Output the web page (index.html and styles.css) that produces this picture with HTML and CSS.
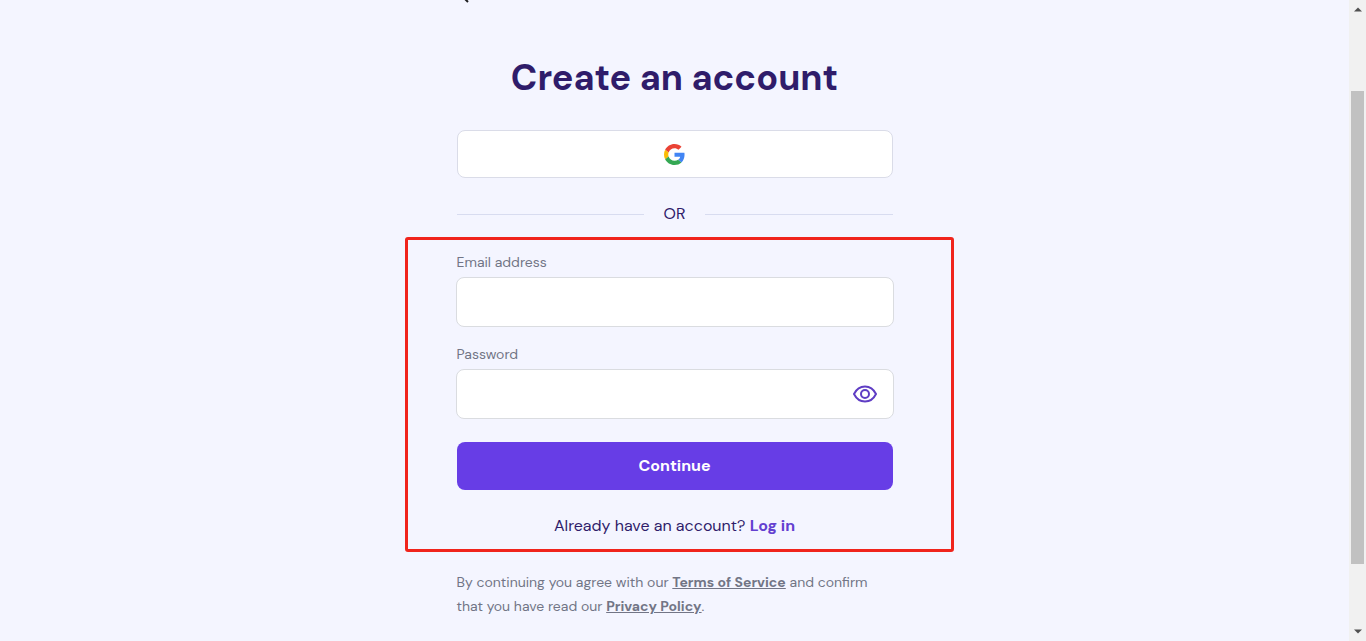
FILE: index.html
```html
<!DOCTYPE html>
<html lang="en">
<head>
    <meta charset="UTF-8">
    <meta name="viewport" content="width=device-width, initial-scale=1.0">
    <title>Create an account</title>
    <link rel="stylesheet" href="styles.css">
</head>
<body>
    <main class="page">
        <div class="signup">
            <a class="back" href="#" aria-label="Back">
                <svg width="12" height="3" viewBox="0 0 12 3"><path d="M7 -2L11 2" stroke="#1d1e20" stroke-width="2" fill="none"/></svg>
            </a>

            <h1>Create an account</h1>

            <button class="google" type="button" aria-label="Continue with Google">
                <svg width="21" height="21" viewBox="0 0 48 48">
                    <path fill="#EA4335" d="M24 9.5c3.54 0 6.71 1.22 9.21 3.6l6.85-6.85C35.9 2.38 30.47 0 24 0 14.62 0 6.51 5.38 2.56 13.22l7.98 6.19C12.43 13.72 17.74 9.5 24 9.5z"/>
                    <path fill="#4285F4" d="M46.98 24.55c0-1.57-.15-3.09-.38-4.55H24v9.02h12.94c-.58 2.96-2.26 5.48-4.78 7.18l7.73 6c4.51-4.18 7.09-10.36 7.09-17.65z"/>
                    <path fill="#FBBC05" d="M10.53 28.59c-.48-1.45-.76-2.99-.76-4.59s.27-3.14.76-4.59l-7.98-6.19C.92 16.46 0 20.12 0 24c0 3.88.92 7.54 2.56 10.78l7.97-6.19z"/>
                    <path fill="#34A853" d="M24 48c6.48 0 11.93-2.13 15.89-5.81l-7.73-6c-2.15 1.45-4.92 2.3-8.16 2.3-6.26 0-11.57-4.22-13.47-9.91l-7.98 6.19C6.51 42.62 14.62 48 24 48z"/>
                </svg>
            </button>

            <div class="divider">OR</div>

            <form class="form">
                <label for="email">Email address</label>
                <div class="field">
                    <input id="email" type="email" autocomplete="email">
                </div>

                <label for="password">Password</label>
                <div class="field">
                    <input id="password" type="password" autocomplete="new-password">
                    <button class="toggle" type="button" aria-label="Show password">
                        <svg width="24" height="24" viewBox="0 0 24 24" fill="none" stroke="#5f3dc4" stroke-width="2">
                            <path d="M1 12C3.3 7.400 7.300 4.500 12 4.500S20.700 7.400 23 12C20.700 16.600 16.700 19.500 12 19.500S3.300 16.600 1 12Z"/>
                            <circle cx="12" cy="12" r="4"/>
                        </svg>
                    </button>
                </div>

                <button class="continue" type="submit">Continue</button>
                <p class="login">Already have an account? <a href="#">Log in</a></p>
            </form>

            <p class="terms">By continuing you agree with our <a href="#">Terms of Service</a> and confirm that you have read our <a href="#">Privacy Policy</a>.</p>
        </div>
    </main>

    <div class="scrollbar" aria-hidden="true">
        <svg width="8" height="5" viewBox="0 0 8 5"><path d="M0 4.500L4 0.500L8 4.500Z" fill="#505050"/></svg>
        <div class="track"><div class="thumb"></div></div>
        <svg width="8" height="5" viewBox="0 0 8 5"><path d="M0 0.500L4 4.500L8 0.500Z" fill="#505050"/></svg>
    </div>
</body>
</html>
```
FILE: styles.css
```css
* {
    box-sizing: border-box;
}

body {
    margin: 0;
    display: flex;
    height: 100vh;
    overflow: hidden;
    background-color: #f4f5ff;
    color: #2f1c6a;
    font-family: "DM Sans", Inter, sans-serif;
    font-size: 16px;
    line-height: 24px;
}

button, input {
    font: inherit;
}

h1, p {
    margin: 0;
}

.page {
    flex: 1;
    display: flex;
    justify-content: center;
    align-items: flex-start;
}

.signup {
    width: 100%;
    max-width: 436px;
}

.back {
    display: flex;
    height: 3px;
}

h1 {
    margin: 51px 0 28px;
    font-size: 36px;
    line-height: 48px;
    font-weight: 700;
    text-align: center;
}

.google {
    display: flex;
    justify-content: center;
    align-items: center;
    width: 100%;
    height: 48px;
    background-color: #fff;
    border: 1px solid #dadce8;
    border-radius: 8px;
    cursor: pointer;
}

.divider {
    display: flex;
    align-items: center;
    gap: 20px;
    margin: 24px 0 26px;
}

.divider::before,
.divider::after {
    content: "";
    flex: 1;
    height: 1px;
    background-color: #d8dcf0;
}

.form {
    position: relative;
}

/* red highlight frame around the form */
.form::after {
    content: "";
    position: absolute;
    inset: -15px -61px -14px -52px;
    border: 3px solid #f0241c;
    border-radius: 3px;
    pointer-events: none;
}

label {
    display: block;
    font-size: 14px;
    line-height: 20px;
    color: #727586;
}

.field {
    display: flex;
    align-items: center;
    height: 50px;
    margin: 5px -1px 17px;
    padding: 0 16px;
    background-color: #fff;
    border: 1px solid #dadce0;
    border-radius: 8px;
}

.field input {
    flex: 1;
    min-width: 0;
    border: none;
    outline: none;
    background: none;
}

.toggle {
    display: flex;
    padding: 0;
    border: none;
    background: none;
    cursor: pointer;
}

.continue {
    width: 100%;
    height: 48px;
    margin: 6px 0 24px;
    border: none;
    border-radius: 8px;
    background-color: #673de6;
    color: #fff;
    font-weight: 700;
    cursor: pointer;
}

.login {
    text-align: center;
}

.login a {
    color: #6340d0;
    font-weight: 700;
    text-decoration: none;
}

.terms {
    margin-top: 32px;
    font-size: 14px;
    color: #727586;
}

.terms a {
    color: inherit;
    font-weight: 700;
}

.scrollbar {
    display: flex;
    flex-direction: column;
    align-items: center;
    width: 17px;
    padding: 7px 2px;
    background-color: #f1f1f1;
}

.track {
    display: grid;
    flex: 1;
    grid-template-rows: 79fr 473fr 65fr;
    width: 100%;
}

.thumb {
    grid-row: 2;
    background-color: #c1c1c1;
}
```
